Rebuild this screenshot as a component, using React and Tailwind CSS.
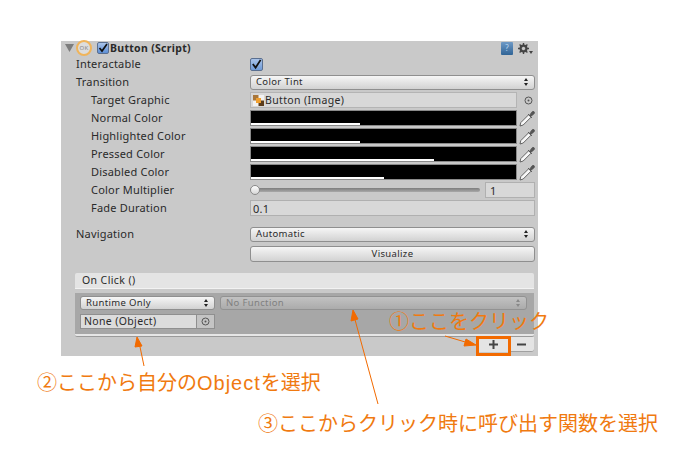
import React from "react";

function Dropper() {
  return (
    <svg width="16" height="17" viewBox="0 0 16 17" className="shrink-0">
      <path d="M1 16 L1.8 12.6 L9.6 4.8 L12 7.2 L4.2 15 Z" fill="#f7f7f7" stroke="#555" strokeWidth="0.9" />
      <path d="M9 4 L13 8 M10.6 5.4 L12.8 2.2 Q14 0.8 15.1 1.8 Q16 3 14.6 4.2 L11.6 6.4 Z" fill="#555" stroke="#555" strokeWidth="0.9" />
    </svg>
  );
}

function Target() {
  return (
    <svg width="9" height="9" viewBox="0 0 9 9">
      <circle cx="4.5" cy="4.5" r="3.5" fill="none" stroke="#555" strokeWidth="1" />
      <circle cx="4.5" cy="4.5" r="1" fill="#555" />
    </svg>
  );
}

function Updown({ dim }) {
  return (
    <svg width="4" height="8" viewBox="0 0 4 8" className="shrink-0">
      <path d="M2 0 L4 3 L0 3 Z M2 8 L4 5 L0 5 Z" fill={dim ? "#888" : "#222"} />
    </svg>
  );
}

function Label({ children, indent }) {
  return <div className={`${indent ? "w-[189px] pl-[30px]" : "w-[189px] pl-[15px]"} pb-[2px] shrink-0 text-[#2a2a2a]`}>{children}</div>;
}

function Row({ label, indent, children }) {
  return (
    <div className="flex items-center h-[18px]">
      <Label indent={indent}>{label}</Label>
      <div className="flex items-center flex-1 min-w-0 pr-[3px]">{children}</div>
    </div>
  );
}

function Select({ children, className = "" }) {
  return (
    <div className={`flex items-center justify-between h-[15px] pl-[5px] pr-[6px] rounded-[3px] border border-[#8f8f8f] bg-gradient-to-b from-[#f6f6f6] to-[#d2d2d2] text-[9.5px] tracking-[0.35px] text-[#2a2a2a] ${className}`}>
      <span>{children}</span>
      <Updown />
    </div>
  );
}

function ColorRow({ label, bar }) {
  return (
    <Row label={label} indent>
      <div className="relative flex-1 h-[16px] bg-black border border-[#8a8a8a]">
        <div className="absolute left-0 bottom-0 h-[2px] bg-white" style={{ width: bar }} />
      </div>
      <div className="w-[18px] flex justify-end">
        <Dropper />
      </div>
    </Row>
  );
}

export default function App() {
  return (
    <div className="relative w-[697px] h-[463px] bg-white overflow-hidden text-[11px] leading-none tracking-[0.2px] font-['Noto_Sans','Liberation_Sans','Noto_Sans_CJK_JP',sans-serif]">
      <div className="ml-[61px] pt-[41px]">
        <div className="w-[477px] h-[315px] bg-[#c9c9c9] flex flex-col">
          {/* Header */}
          <div className="flex items-center h-[14px] pl-[4px] pr-[5px]">
            <svg width="10" height="8" viewBox="0 0 10 8" className="mr-[1px]"><path d="M0 0 H9 L4.5 8 Z" fill="#7d7d7d" /></svg>
            <div className="w-[16px] h-[16px] rounded-full border-2 border-[#f0b45a] bg-[#ddd] text-[6px] text-[#888] flex items-center justify-center mr-[5px]">OK</div>
            <div className="w-[12px] h-[12px] rounded-[2px] bg-gradient-to-b from-[#a9c3e8] to-[#5d8fd6] border border-[#5a6f90] flex items-center justify-center mr-[1px]">
              <svg width="10" height="10" viewBox="0 0 10 10"><path d="M1.5 5 L4 8 L9 1" fill="none" stroke="#111" strokeWidth="1.7" /></svg>
            </div>
            <span className="font-bold text-[#2a2a2a] text-[10.5px] tracking-[0.3px]">Button (Script)</span>
            <div className="flex-1" />
            <div className="w-[12px] h-[13px] bg-gradient-to-b from-[#6f9ac6] to-[#2f6496] rounded-[1px] text-[8px] text-[#b7d4ee] flex items-center justify-center mr-[5px]">?</div>
            <div className="flex items-start w-[15px]">
              <svg width="11" height="11" viewBox="0 0 11 11"><circle cx="5.5" cy="5.5" r="3" fill="none" stroke="#444" strokeWidth="2" /><path d="M5.5 0 V11 M0 5.5 H11 M1.6 1.6 L9.4 9.4 M1.6 9.4 L9.4 1.6" stroke="#444" strokeWidth="1.4" /><circle cx="5.5" cy="5.5" r="1.7" fill="#c9c9c9" /></svg>
              <svg width="4" height="3" viewBox="0 0 4 3" className="mt-[8px]"><path d="M0 0 H4 L2 3 Z" fill="#444" /></svg>
            </div>
          </div>

          <Row label="Interactable">
            <div className="w-[13px] h-[13px] rounded-[2px] bg-gradient-to-b from-[#a9c3e8] to-[#6f9bd8] border border-[#5a6f90] flex items-center justify-center">
              <svg width="12" height="12" viewBox="0 0 12 12"><path d="M2 6 L5 10 L10.5 1.5" fill="none" stroke="#111" strokeWidth="2" /></svg>
            </div>
          </Row>
          <Row label="Transition">
            <Select className="flex-1">Color Tint</Select>
          </Row>
          <Row label="Target Graphic" indent>
            <div className="flex-1 h-[16px] bg-[#d8d8d8] border border-[#b4b4b4] flex items-center pl-[2px] text-[#2a2a2a] text-[10.5px] tracking-[0.35px]">
              <svg width="11" height="11" viewBox="0 0 11 11" className="mr-[1px]">
                <rect width="11" height="11" fill="#f2f2f2" />
                <rect width="5.5" height="5.5" fill="#a8763a" />
                <rect x="5.5" y="5.5" width="5.5" height="5.5" fill="#5a3c1c" />
                <rect x="3" y="3" width="5" height="5" fill="#f0a030" />
              </svg>
              Button (Image)
            </div>
            <div className="w-[18px] flex justify-end pr-[2px]">
              <Target />
            </div>
          </Row>
          <ColorRow label="Normal Color" bar="109px" />
          <ColorRow label="Highlighted Color" bar="109px" />
          <ColorRow label="Pressed Color" bar="183px" />
          <ColorRow label="Disabled Color" bar="133px" />
          <Row label="Color Multiplier" indent>
            <div className="relative flex-1 flex items-center mr-[5px]">
              <div className="w-full h-[4px] rounded-full bg-gradient-to-b from-[#7d7d7d] to-[#a8a8a8]" />
              <div className="absolute left-0 w-[10px] h-[10px] rounded-full border border-[#8a8a8a] bg-gradient-to-b from-white to-[#d6d6d6]" />
            </div>
            <div className="w-[50px] h-[16px] bg-[#d8d8d8] border border-[#b0b0b0] flex items-center pl-[4px] text-[#2a2a2a]">1</div>
          </Row>
          <Row label="Fade Duration" indent>
            <div className="flex-1 h-[16px] bg-[#d8d8d8] border border-[#b0b0b0] flex items-center pl-[2px] text-[#2a2a2a]">0.1</div>
          </Row>
          <div className="h-[8px]" />
          <Row label="Navigation">
            <Select className="flex-1">Automatic</Select>
          </Row>
          <div className="flex justify-end pr-[3px] mt-[3px]">
            <div className="w-[285px] h-[16px] rounded-[3px] border border-[#8f8f8f] bg-gradient-to-b from-[#f6f6f6] to-[#d2d2d2] text-[9.5px] tracking-[0.35px] text-[#2a2a2a] flex items-center justify-center">Visualize</div>
          </div>

          {/* On Click */}
          <div className="mt-[11px] ml-[14px] mr-[4px] flex flex-col">
            <div className="h-[16px] bg-[#e4e4e4] rounded-t-[2px] border-b border-[#f2f2f2] flex items-center pl-[7px] text-[#2a2a2a] text-[10.5px] tracking-[0.4px]">On Click ()</div>
            <div className="mt-[4px] h-[41px] bg-[#a7a7a7] pl-[5px] pr-[7px] pt-[3px] flex flex-col">
              <div className="flex gap-[5px]">
                <Select className="w-[135px] !h-[14px]">Runtime Only</Select>
                <div className="flex-1 flex items-center justify-between h-[14px] pl-[5px] pr-[6px] rounded-[3px] border border-[#929292] bg-gradient-to-b from-[#c2c2c2] to-[#ababab] text-[9.5px] tracking-[0.35px] text-[#808080]">
                  <span>No Function</span>
                  <Updown dim />
                </div>
              </div>
              <div className="flex mt-[4px] w-[135px] h-[15px]">
                <div className="flex-1 bg-[#dcdcdc] border border-[#8f8f8f] flex items-center pl-[3px] text-[#2a2a2a] text-[10.5px] tracking-[0.35px]">None (Object)</div>
                <div className="w-[18px] bg-[#c4c4c4] border border-l-0 border-[#8f8f8f] flex items-center justify-center"><Target /></div>
              </div>
            </div>
            <div className="h-[3px] bg-[#e6e6e6] rounded-b-[2px] border-b border-[#9a9a9a]" />
            <div className="flex justify-end">
              <div className="w-[29px] h-[15px] bg-[#e4e4e4] flex items-center justify-center">
                <svg width="9" height="9" viewBox="0 0 9 9"><path d="M4.5 0 V9 M0 4.5 H9" stroke="#444" strokeWidth="2" /></svg>
              </div>
              <div className="w-[26px] h-[15px] bg-[#e4e4e4] border-b border-[#a0a0a0] rounded-br-[3px] flex items-center justify-center">
                <svg width="9" height="9" viewBox="0 0 9 9"><path d="M0 4.5 H9" stroke="#444" strokeWidth="2" /></svg>
              </div>
            </div>
          </div>
        </div>
      </div>

      {/* Annotations */}
      <div className="absolute left-[476px] top-[336px] w-[35px] h-[20px] border-[3px] border-[#f26a00]" />
      <div className="absolute left-[389px] top-[312px] text-[20px] text-[#f07a10] tracking-[0px] whitespace-nowrap">①ここをクリック</div>
      <div className="absolute left-[37px] top-[373px] text-[20px] text-[#f07a10] tracking-[0px] whitespace-nowrap">②ここから自分の<span className="font-['Liberation_Sans',sans-serif] tracking-[1px]">Object</span>を選択</div>
      <div className="absolute left-[258px] top-[414px] text-[20px] text-[#f07a10] tracking-[0px] whitespace-nowrap">③ここからクリック時に呼び出す関数を選択</div>
      <svg className="absolute left-0 top-0 pointer-events-none" width="697" height="463" viewBox="0 0 697 463">
        <g stroke="#f26a00" strokeWidth="1" fill="#f26a00">
          <path d="M445 336 L472 344" />
          <path d="M476 345 L466 339 L464 346 Z" />
          <path d="M144 366 L139 342" />
          <path d="M137 337 L135 347 L142 346 Z" />
          <path d="M378 404 L354 316" />
          <path d="M353 310 L351 321 L358 319 Z" />
        </g>
      </svg>
    </div>
  );
}
